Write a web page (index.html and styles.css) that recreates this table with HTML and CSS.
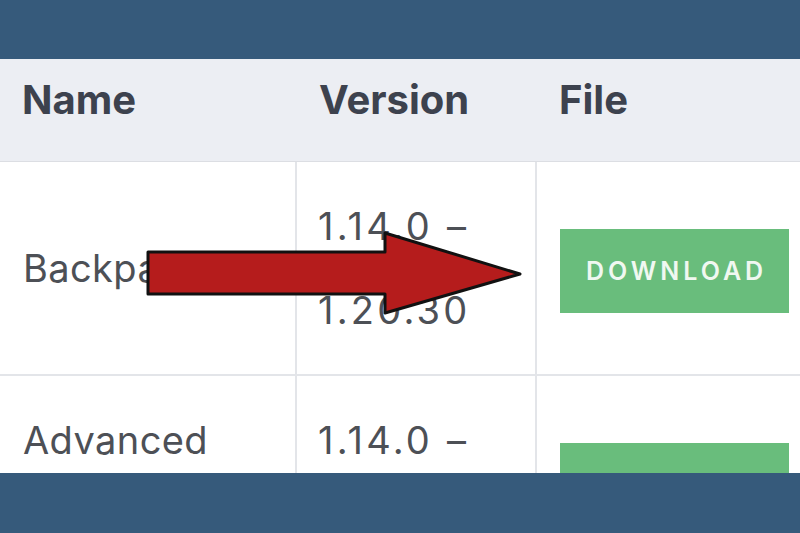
FILE: index.html
```html
<!DOCTYPE html>
<html lang="en">
<head>
<meta charset="utf-8">
<title>Downloads</title>
<link rel="stylesheet" href="styles.css">
</head>
<body>
<div class="page">
  <div class="band"></div>
  <div class="content">
    <div class="table">
      <div class="th">Name</div>
      <div class="th">Version</div>
      <div class="th">File</div>

      <div class="td">Backpacks</div>
      <div class="td td-top td-ver">1.14.0 – 1.20.30</div>
      <div class="td td-last"><a class="btn" href="#">DOWNLOAD</a></div>

      <div class="td td-top">Advanced Backpacks</div>
      <div class="td td-top td-ver">1.14.0 – 1.20.30</div>
      <div class="td td-last"><a class="btn" href="#">DOWNLOAD</a></div>
    </div>
    <svg class="arrow" width="800" height="474" viewBox="0 59 800 474" aria-hidden="true">
      <polygon points="148,252 385,252 385,233 520,274 385,313 385,294 148,294" fill="#b51c1c" stroke="#111" stroke-width="3" stroke-linejoin="round"/>
    </svg>
  </div>
  <div class="band"></div>
</div>
</body>
</html>
```

FILE: styles.css
```css
html, body {
  margin: 0;
  padding: 0;
  background: #ffffff;
}

body {
  overflow: hidden;
  font-family: Inter, "Noto Sans", sans-serif;
}

.page {
  height: 533px;
  display: grid;
  grid-template-rows: 59px 1fr 60px;
}

.band {
  background: #365a7b;
}

.content {
  position: relative;
  overflow: hidden;
}

.table {
  display: grid;
  grid-template-columns: 297px 240px 1fr;
}

.th {
  height: 103px;
  box-sizing: border-box;
  padding: 16px 22px 0;
  background: #eceef3;
  border-bottom: 1px solid #dcdee3;
  font-size: 40px;
  line-height: 49px;
  font-weight: 700;
  color: #3d424e;
}

.td {
  padding: 22px 23px;
  border-right: 2px solid #e3e5e9;
  border-bottom: 2px solid #e3e5e9;
  font-size: 38px;
  line-height: 84px;
  color: #4d5056;
  letter-spacing: 0.4px;
  display: flex;
  align-items: center;
}

.td-top {
  align-items: flex-start;
}

.td-ver {
  padding-left: 21px;
  letter-spacing: 3.2px;
}

.td-last {
  border-right: none;
  padding-top: 28px;
  padding-bottom: 22px;
}

.btn {
  display: flex;
  align-items: center;
  justify-content: center;
  width: 229px;
  height: 84px;
  box-sizing: border-box;
  padding-left: 4px;
  background: #69bd7c;
  color: #f0f8f1;
  text-decoration: none;
  font-size: 25px;
  line-height: 1;
  font-weight: 600;
  letter-spacing: 4px;
}

.arrow {
  position: absolute;
  left: 0;
  top: 0;
}
```
